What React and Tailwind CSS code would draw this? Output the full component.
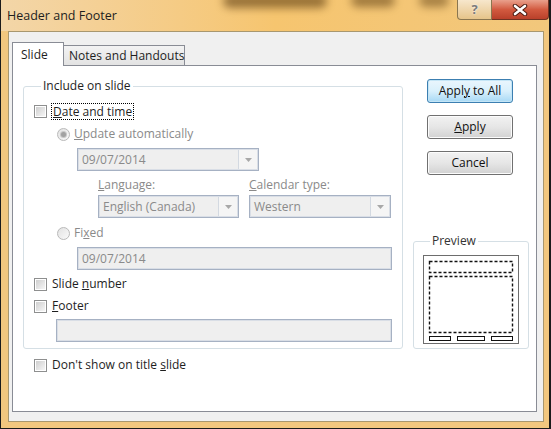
import React from "react";

function CheckBox() {
  return (
    <div className="h-[13px] w-[13px] shrink-0 border border-[#8e8f8f] bg-white p-[1px]">
      <div className="h-full w-full bg-gradient-to-br from-[#cfcfcf] to-[#f6f6f6]" />
    </div>
  );
}

function Radio({ checked }) {
  return (
    <div className="grid h-[13px] w-[13px] shrink-0 place-items-center rounded-full border border-[#b9b9b9] bg-gradient-to-br from-[#e2e2e2] to-[#fafafa]">
      {checked && <div className="h-[5px] w-[5px] rounded-full bg-[#a2a2a2] ring-1 ring-[#c8c8c8]" />}
    </div>
  );
}

function Field({ value, dropdown, className = "" }) {
  return (
    <div className={`flex h-[23px] items-stretch border border-[#a6b1c3] bg-[#efefef] shadow-[inset_0_0_0_1px_#d9dee6] ${className}`}>
      <span className="flex flex-1 items-center pl-[4px] text-[#8a8a8a]">{value}</span>
      {dropdown && (
        <span className="m-[1px] grid w-[19px] place-items-center border-l border-[#d3d9e1] bg-[#f5f5f5]">
          <svg width="7" height="4" viewBox="0 0 7 4">
            <polygon points="0,0 7,0 3.5,4" fill="#a8a8a8" />
          </svg>
        </span>
      )}
    </div>
  );
}

function Button({ children, primary }) {
  const tone = primary
    ? "border-[#3c7fb1] bg-gradient-to-b from-[#eaf6fd] via-[#d9f0fc] to-[#a7d9f5] shadow-[inset_0_0_0_1px_#c4e5f6]"
    : "border-[#707070] bg-gradient-to-b from-[#f2f2f2] via-[#e6e6e6] to-[#d2d2d2] shadow-[inset_0_0_0_1px_#fcfcfc]";
  return (
    <div className={`flex h-[24px] w-[86px] items-center justify-center rounded-[3px] border text-[#111] ${tone}`}>
      {children}
    </div>
  );
}

export default function App() {
  return (
    <div className="flex h-[429px] w-[551px] flex-col overflow-hidden border-b border-l border-r-2 border-[#1b1b1b] bg-[#f2c77f] font-['Open_Sans',sans-serif] text-[12px] leading-[16px] text-[#1e1e1e]">
      <div className="relative flex h-[31px] shrink-0 items-start bg-gradient-to-r from-[#f3d6a8] via-[#f6c56f] to-[#f2c77c]">
        {/* blurred glass backdrop behind the title bar */}
        <div className="absolute left-[222px] top-[-6px] h-[14px] w-[104px] rounded-full bg-[#5a3a10] opacity-60 blur-[4px]" />
        <div className="absolute left-[350px] top-[-6px] h-[13px] w-[44px] rounded-full bg-[#5a3a10] opacity-55 blur-[4px]" />
        <div className="absolute left-[418px] top-[-6px] h-[13px] w-[30px] rounded-full bg-[#5a3a10] opacity-50 blur-[4px]" />
        <span className="relative flex h-[31px] items-center pl-[6px] text-[12.5px] text-[#1e1e1e]">Header and Footer</span>
        <div className="relative ml-auto flex">
          <div className="grid h-[20px] w-[35px] place-items-center rounded-bl-[4px] border border-t-0 border-[#8a7650] bg-gradient-to-b from-[#f7e7cc] to-[#e6c48a]">
            <span className="text-[13px] font-bold leading-none text-[#7a7a7a] [text-shadow:0_0_2px_#fff]">?</span>
          </div>
          <div className="grid h-[20px] w-[57px] place-items-center rounded-br-[4px] border border-l-0 border-t-0 border-[#6e3222] bg-gradient-to-b from-[#e9a08c] via-[#d25a40] to-[#b9402a]">
            <svg width="16" height="12" viewBox="0 0 16 12">
              <path d="M3 2 L13 10 M13 2 L3 10" stroke="#4a1a10" strokeWidth="4.5" strokeLinecap="round" />
              <path d="M3 2 L13 10 M13 2 L3 10" stroke="#ffffff" strokeWidth="2.6" strokeLinecap="round" />
            </svg>
          </div>
        </div>
      </div>

      <div className="mb-[6px] ml-[7px] flex w-[536px] flex-1 flex-col border border-[#a8976f] bg-[#f0f0f0] pb-[9px] pl-[3px] pr-[6px] pt-[10px]">
        <div className="flex h-[23px] items-end">
          <div className="relative z-10 -mb-px flex h-[24px] w-[52px] items-center border border-b-0 border-[#898c95] bg-white pl-[8px]">
            Slide
          </div>
          <div className="-ml-px flex h-[20px] w-[122px] items-center whitespace-nowrap border border-b-0 border-[#898c95] bg-gradient-to-b from-[#f3f3f3] to-[#e3e3e3] pl-[5px]">
            Notes and Handouts
          </div>
        </div>

        <div className="flex flex-1 border border-[#898c95] bg-white">
          <div className="flex w-[390px] flex-col pl-[10px] pt-[12px]">
            <fieldset className="w-[380px] rounded-[3px] border border-[#d5dfe5] pb-[6px] pl-[10px] pr-[9px]">
              <legend className="ml-[7px] px-[2px]">Include on slide</legend>
              <div className="mt-[7px] flex h-[20px] items-center">
                <CheckBox />
                <span className="ml-[4px] border border-dotted border-black px-[1px] leading-[15px]">
                  <u>D</u>ate and time
                </span>
              </div>
              <div className="ml-[23px] mt-[3px] flex h-[20px] items-center text-[#8a8a8a]">
                <Radio checked />
                <span className="ml-[4px]">
                  <u>U</u>pdate automatically
                </span>
              </div>
              <Field value="09/07/2014" dropdown className="ml-[43px] mt-[4px] w-[182px]" />
              <div className="ml-[64px] mt-[6px] grid grid-cols-[141px_142px] gap-x-[10px] gap-y-[2px] text-[#8a8a8a]">
                <span className="h-[16px]">
                  <u>L</u>anguage:
                </span>
                <span className="h-[16px]">
                  <u>C</u>alendar type:
                </span>
                <Field value="English (Canada)" dropdown />
                <Field value="Western" dropdown />
              </div>
              <div className="ml-[23px] mt-[5px] flex h-[20px] items-center text-[#8a8a8a]">
                <Radio />
                <span className="ml-[4px]">
                  Fi<u>x</u>ed
                </span>
              </div>
              <Field value="09/07/2014" className="ml-[43px] mt-[4px] w-[315px]" />
              <div className="mt-[4px] flex h-[20px] items-center">
                <CheckBox />
                <span className="ml-[5px]">
                  Slide <u>n</u>umber
                </span>
              </div>
              <div className="mt-[2px] flex h-[20px] items-center">
                <CheckBox />
                <span className="ml-[5px]">
                  <u>F</u>ooter
                </span>
              </div>
              <Field value="" className="ml-[22px] mt-[3px] w-[336px]" />
            </fieldset>
            <div className="mt-[6px] flex h-[20px] items-center pl-[11px]">
              <CheckBox />
              <span className="ml-[5px]">
                Don't show on title <u>s</u>lide
              </span>
            </div>
          </div>

          <div className="ml-[10px] flex w-[116px] flex-col">
            <div className="mt-[13px] flex flex-col gap-[12px] pl-[14px]">
              <Button primary>
                <span>
                  Appl<u>y</u> to All
                </span>
              </Button>
              <Button>
                <span>
                  <u>A</u>pply
                </span>
              </Button>
              <Button>Cancel</Button>
            </div>
            <fieldset className="mt-[58px] w-[116px] rounded-[3px] border border-[#d5dfe5] pb-[4px] pl-[9px] pt-[6px]">
              <legend className="ml-[7px] px-[2px] text-[#333]">Preview</legend>
              <div className="h-[89px] w-[96px] border border-[#6d6d6d] bg-white">
                <svg width="94" height="87" viewBox="0 0 94 87">
                  <rect x="5.5" y="5.5" width="83" height="11" fill="none" stroke="#111" strokeWidth="1.4" strokeDasharray="3 2" />
                  <rect x="5.5" y="20.5" width="83" height="56" fill="none" stroke="#111" strokeWidth="1.4" strokeDasharray="3 2" />
                  <rect x="5.5" y="80.5" width="21" height="4" fill="none" stroke="#111" strokeWidth="1" />
                  <rect x="33.5" y="80.5" width="27" height="4" fill="none" stroke="#111" strokeWidth="1" />
                  <rect x="67.5" y="80.5" width="21" height="4" fill="none" stroke="#111" strokeWidth="1" />
                </svg>
              </div>
            </fieldset>
          </div>
        </div>
      </div>
    </div>
  );
}
